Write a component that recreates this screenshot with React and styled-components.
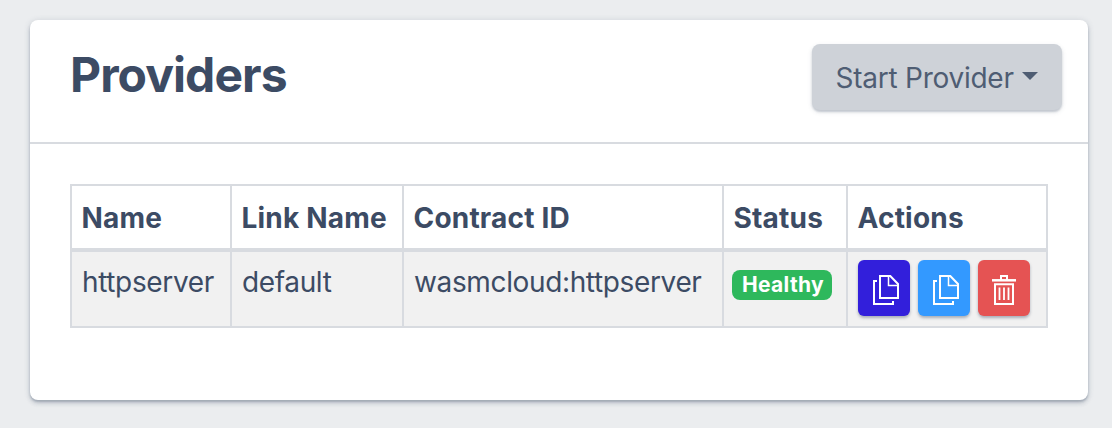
import React from "react";
import styled, { createGlobalStyle } from "styled-components";

const GlobalStyle = createGlobalStyle`
  body {
    margin: 0;
    background: #ebedef;
    color: #3c4b64;
    font-family: Inter, "Liberation Sans", sans-serif;
    font-size: 28px;
    line-height: 42px;
  }
  *, *::before, *::after { box-sizing: border-box; }
`;

const Page = styled.main`
  height: 428px;
  padding: 20px 24px 28px 30px;
`;

const Card = styled.section`
  height: 380px;
  background: #fff;
  border-radius: 8px;
  box-shadow: 0 2px 2px rgba(60, 75, 100, 0.24), 0 4px 4px rgba(60, 75, 100, 0.12),
    0 1px 6px rgba(60, 75, 100, 0.2);
`;

const CardHeader = styled.header`
  display: flex;
  justify-content: space-between;
  align-items: flex-start;
  height: 124px;
  padding: 24px 26px 0 40px;
  border-bottom: 2px solid #d8dbe0;
`;

const Title = styled.h1`
  margin: 0;
  padding-top: 2px;
  font-size: 48px;
  line-height: 58px;
  font-weight: 700;
  letter-spacing: -0.95px;
`;

const DropdownButton = styled.button`
  display: flex;
  width: 250px;
  height: 66px;
  padding: 13px 0 0 23.5px;
  border: 0;
  border-radius: 8px;
  background: #ced2d8;
  color: #4f5d73;
  font: inherit;
  letter-spacing: -0.25px;
  box-shadow: 0 2px 2px rgba(60, 75, 100, 0.22), 0 2px 5px rgba(60, 75, 100, 0.14);
  &::after {
    content: "";
    align-self: flex-start;
    margin: 15px 0 0 8px;
    border: solid transparent;
    border-width: 8px 8px 0;
    border-top-color: #4f5d73;
  }
`;

const Table = styled.table`
  width: 978px;
  margin: 40px 0 0 40px;
  table-layout: fixed;
  border-collapse: separate;
  border-spacing: 0;
  border: solid #d8dbe0;
  border-width: 2px 0 0 2px;
`;

const Column = styled.col`
  width: ${(p) => p.$width}px;
`;

const HeadCell = styled.th`
  height: 66px;
  padding: 11px 9.5px 9px;
  text-align: left;
  vertical-align: top;
  font-weight: 700;
  letter-spacing: 0.2px;
  border: solid #d8dbe0;
  border-width: 0 2px 4px 0;
  white-space: nowrap;
`;

const Cell = styled.td`
  height: 76px;
  padding: ${(p) => (p.$controls ? "8px 10px" : "9px 10px")};
  vertical-align: top;
  letter-spacing: -0.36px;
  background: #f1f1f1;
  border: solid #d8dbe0;
  border-width: 0 2px 2px 0;
  white-space: nowrap;
`;

const Badge = styled.span`
  display: block;
  width: 100px;
  height: 30px;
  margin: 9px 0 0 -2px;
  padding-left: 2px;
  border-radius: 8px;
  background: #2eb85c;
  color: #fff;
  font-size: 21px;
  line-height: 30px;
  font-weight: 700;
  letter-spacing: 0.35px;
  text-align: center;
`;

const Actions = styled.div`
  display: flex;
  gap: 8px;
`;

const ActionButton = styled.button`
  width: 52px;
  height: 56px;
  padding: 0;
  border: 0;
  border-radius: 6px;
  background: ${(p) => p.$color};
  box-shadow: 0 2px 3px rgba(60, 75, 100, 0.4);
`;

const Icon = styled.svg`
  display: block;
  fill: none;
  stroke: #fff;
  stroke-width: 2;
`;

const CopyIcon = () => (
  <Icon width="52" height="56" viewBox="0 0 52 56">
    <path d="M19 21h-3v23h19v-3" />
    <path d="M22 16h10.3l7.7 8v14H22z" />
    <path d="M30.5 16v9.5H40" strokeWidth="1.5" />
  </Icon>
);

const TrashIcon = () => (
  <Icon width="52" height="56" viewBox="0 0 52 56">
    <path d="M14 20.3h24" strokeWidth="2.5" />
    <path d="M23 20v-4h6v4" />
    <path d="M17 24.3h18V44H17z" />
    <path d="M21.5 27.5V40M26 27.5V40M30.5 27.5V40" strokeWidth="1.8" />
  </Icon>
);

const columns = [
  ["Name", 160],
  ["Link Name", 172],
  ["Contract ID", 320],
  ["Status", 124],
  ["Actions", 200],
];

export default function App() {
  return (
    <Page>
      <GlobalStyle />
      <Card>
        <CardHeader>
          <Title>Providers</Title>
          <DropdownButton>Start Provider</DropdownButton>
        </CardHeader>
        <Table>
          <colgroup>
            {columns.map(([name, width]) => (
              <Column key={name} $width={width} />
            ))}
          </colgroup>
          <thead>
            <tr>
              {columns.map(([name]) => (
                <HeadCell key={name}>{name}</HeadCell>
              ))}
            </tr>
          </thead>
          <tbody>
            <tr>
              <Cell>httpserver</Cell>
              <Cell>default</Cell>
              <Cell>wasmcloud:httpserver</Cell>
              <Cell>
                <Badge>Healthy</Badge>
              </Cell>
              <Cell $controls>
                <Actions>
                  <ActionButton $color="#321fdb" aria-label="Copy provider">
                    <CopyIcon />
                  </ActionButton>
                  <ActionButton $color="#3399ff" aria-label="Copy link">
                    <CopyIcon />
                  </ActionButton>
                  <ActionButton $color="#e55353" aria-label="Delete provider">
                    <TrashIcon />
                  </ActionButton>
                </Actions>
              </Cell>
            </tr>
          </tbody>
        </Table>
      </Card>
    </Page>
  );
}
